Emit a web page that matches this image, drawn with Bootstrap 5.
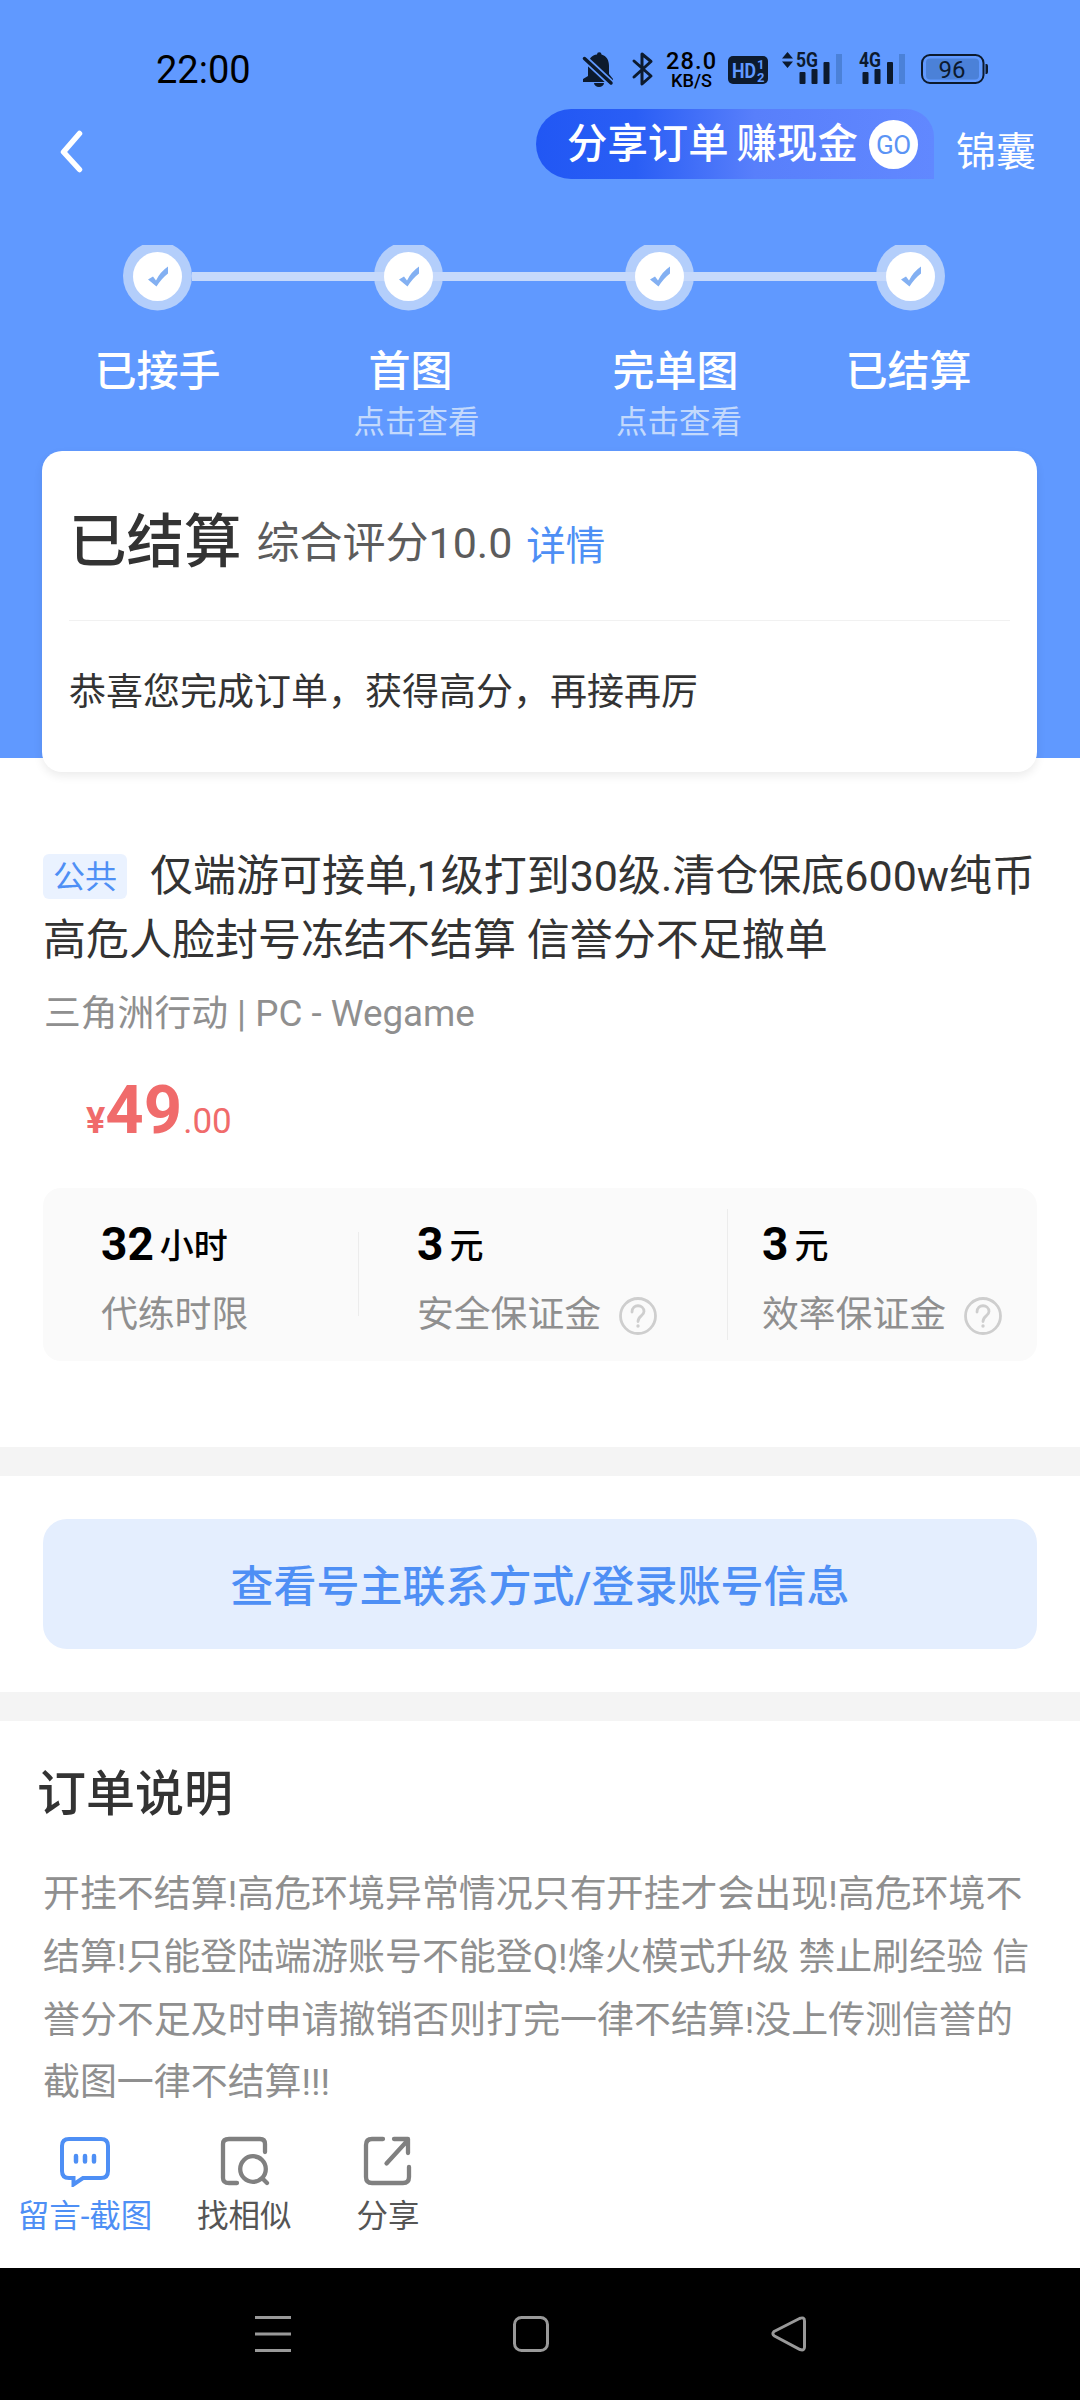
<!DOCTYPE html>
<html lang="zh-CN">
<head>
<meta charset="utf-8">
<meta name="viewport" content="width=device-width, initial-scale=1">
<title>订单详情</title>
<link rel="stylesheet" href="https://cdn.jsdelivr.net/npm/bootstrap@5.3.0/dist/css/bootstrap.min.css">
<style>
  body { font-family: Roboto, "Noto Sans CJK SC", sans-serif; color: #333; background: #fff; width: 1080px; height: 2400px; overflow: hidden; }
  svg { display: block; flex: none; }
  .hero { height: 758px; background: #6099ff; }
  .status-row { height: 90px; padding: 1px 90px 0 156px; }
  .clock { font-size: 38px; line-height: 90px; margin-top: 24px; color: #000; font-weight: 400; }
  .app-row { height: 155px; padding: 19px 43px 0 60px; }
  .back-icon { margin-top: 21px; }
  .share-pill { width: 398px; height: 70px; margin-left: 453px; padding: 0 16px 0 31px; border-radius: 35px 28px 0 35px; background: linear-gradient(90deg, #2157f4 0%, #2a5ef5 25%, #587ffb 55%, #6188ff 100%); font-size: 40.4px; font-weight: 500; word-spacing: -2px; }
  .share-text { line-height: 70px; padding-top: 2px; }
  .go-dot { width: 49px; height: 49px; margin-left: 11px; background: #fff; color: #5b94f5; font-size: 26px; font-weight: 400; line-height: 50px; letter-spacing: -.5px; }
  .kit-link { font-size: 40px; line-height: 40px; margin: 24px 0 0 22px; }
  .track { margin-left: 122px; }
  .steps { padding: 34px 0 0 94px; height: 140px; }
  .step-item { width: 127px; margin-right: 132px; }
  .step-item.near { margin-right: 106px; }
  .step-name { font-size: 42px; line-height: 54px; font-weight: 500; }
  .step-name.shift { padding-right: 12px; }
  .step-sub { font-size: 31.5px; line-height: 48px; color: #c3d9fc; }
  .result-card { height: 321px; margin: 0 43px 0 42px; border-radius: 20px; background: #fff; box-shadow: 0 4px 10px rgba(0,0,0,.08); padding: 0 27px; color: #333; }
  .result-top { height: 170px; border-bottom: 1px solid #f1f1f1; }
  .state { font-size: 57.500px; font-weight: 500; line-height: 184px; }
  .score { font-size: 43px; line-height: 185px; margin-left: 15px; color: #5c5c5c; }
  .detail { font-size: 39.5px; line-height: 191px; margin-left: 14px; color: #4e8ff5; }
  .congrats { font-size: 37px; line-height: 60px; padding-top: 42px; }
  .order { padding: 86px 43px 0 43px; height: 689px; }
  .order-title { font-size: 43px; line-height: 64px; height: 128px; white-space: nowrap; }
  .pub-tag { width: 84px; height: 45px; line-height: 46px; font-size: 32px; border-radius: 6px; background: #eaf2ff; color: #4e8ff5; vertical-align: 3px; margin-right: 23px; }
  .order-sub { font-size: 36.8px; line-height: 50px; color: #8f8f8f; margin-top: 17px; padding-left: 1px; }
  .price { color: #f06b6b; padding-left: 43px; height: 149px; padding-top: 26px; line-height: 90px; }
  .yen { font-size: 36px; font-weight: 700; }
  .amt { font-size: 67px; font-weight: 700; }
  .cents { font-size: 35px; margin-left: 1px; }
  .terms { height: 173px; border-radius: 18px; background: #fafafa; }
  .term { padding-top: 27px; }
  .term-1 { width: 315px; padding-left: 58px; }
  .term-2 { width: 368px; padding-left: 58px; }
  .term-3 { padding-left: 34px; }
  .rule-v { width: 1px; background: #ececec; }
  .num { color: #000; font-size: 34px; font-weight: 500; line-height: 58px; height: 58px; }
  .num b { font-size: 46px; margin-right: 6px; }
  .num span { vertical-align: 2px; }
  .term-label { font-size: 36.8px; line-height: 60px; margin-top: 12px; color: #8f8f8f; }
  .q-icon { margin-left: 18px; margin-top: 2px; }
  .band { height: 29px; background: #f4f4f4; }
  .contact { padding: 43px 43px 0; height: 216px; }
  .contact-btn { height: 130px; border-radius: 24px; background: #e4eefe; color: #4e8ff5; font-size: 43px; font-weight: 500; border: 0; line-height: 130px; padding: 3px 0 0; }
  .notes { height: 402px; padding: 42px 0 0 43px; }
  .notes h2 { font-size: 49px; font-weight: 500; line-height: 64px; margin: 0 0 0 -6px; }
  .notes p { font-size: 36.95px; line-height: 62.8px; color: #8f8f8f; margin: 37px 0 0; white-space: nowrap; }
  .tools { height: 145px; padding: 12px 0 0 17px; font-size: 31.5px; line-height: 40px; color: #555; }
  .tools svg { margin-bottom: 10px; }
  .tool-blue { color: #4e8ff5; width: 136px; }
  .sys-nav { height: 132px; background: #000; padding: 47px 0 0 255px; }
</style>
</head>
<body>
<header class="hero text-white">
  <div class="status-row d-flex justify-content-between align-items-start">
    <span class="clock">22:00</span>
    <svg width="408" height="44" viewBox="582 48 408 44" style="margin-top:47px" fill="#0c1a2e" font-family="Roboto, sans-serif">
      <!-- muted bell -->
      <path d="M588 76 V66 C588 59 592 55 597 54.500 A2 2 0 0 1 601.500 54.500 C606.500 56 609 60 609 66 V74 L613 79 V82 H583 V79 Z"/>
      <path d="M594 83 H604 A5 4 0 0 1 594 83 Z"/>
      <path d="M581 55 L613 85" stroke="#6099ff" stroke-width="7"/>
      <path d="M584.500 58.500 L611 83" stroke="#0c1a2e" stroke-width="3.500" stroke-linecap="round"/>
      <path d="M634 61 L651 76 L642 84 V54 L651 61.500 L634 77" fill="none" stroke="#0c1a2e" stroke-width="3" stroke-linejoin="round" stroke-linecap="round"/>
      <g fill="#000" font-weight="500"><text x="666" y="69" font-size="23.500" textLength="50">28.0</text><text x="671" y="87" font-size="17.500" textLength="41" lengthAdjust="spacingAndGlyphs">KB/S</text></g>
      <rect x="728" y="56" width="40" height="28" rx="5"/>
      <g fill="#6099ff" font-weight="700"><text x="732" y="78" font-size="21" textLength="24" lengthAdjust="spacingAndGlyphs">HD</text><text x="757" y="69" font-size="13">1</text><text x="757" y="82" font-size="13">2</text></g>
      <path d="M782 58.500 L787.500 52 L793 58.500 Z M782 61.500 L787.500 68 L793 61.500 Z"/>
      <g font-size="20" font-weight="700"><text x="796" y="67" textLength="22" lengthAdjust="spacingAndGlyphs">5G</text><text x="859" y="67" textLength="22" lengthAdjust="spacingAndGlyphs">4G</text></g>
      <g><rect x="799.500" y="72" width="6" height="12" rx="1"/><rect x="811.500" y="69" width="6" height="15" rx="1"/><rect x="823.500" y="62" width="6" height="22" rx="1"/><rect x="836" y="54" width="6" height="30" fill="#4b81d8"/>
      <rect x="862.500" y="72" width="6" height="12" rx="1"/><rect x="874.500" y="69" width="6" height="15" rx="1"/><rect x="887" y="62" width="6" height="22" rx="1"/><rect x="899" y="54" width="6" height="30" fill="#4b81d8"/></g>
      <rect x="922" y="55" width="61.500" height="28" rx="8" fill="none" stroke="#0c1a2e" stroke-width="2"/>
      <rect x="926" y="58.500" width="53" height="21" rx="4" fill="#4b81d8"/>
      <path d="M985.500 64 h1 q1.500 0 1.500 2 v6 q0 2 -1.500 2 h-1 z"/>
      <text x="938.500" y="78" font-size="24" textLength="27">96</text>
    </svg>
  </div>
  <div class="app-row d-flex align-items-start">
    <svg class="back-icon" width="23" height="43" viewBox="0 0 23 43" fill="none" stroke="#fff" stroke-width="5.500" stroke-linecap="round" stroke-linejoin="round"><path d="M19.500 3.500 L3.500 22 L19.500 39.500"/></svg>
    <div class="share-pill d-flex align-items-center text-nowrap"><span class="share-text">分享订单 赚现金</span><span class="go-dot rounded-circle text-center">GO</span></div>
    <span class="kit-link">锦囊</span>
  </div>
  <svg class="track" width="824" height="66" viewBox="0 0 824 66">
    <g fill="#b3cefb"><circle cx="35.500" cy="31" r="34.500"/><circle cx="286.500" cy="31" r="34.500"/><circle cx="537.500" cy="31" r="34.500"/><circle cx="788.500" cy="31" r="34.500"/></g>
    <rect x="70" y="27" width="718" height="9" fill="#c6d9fb"/>
    <g fill="#fff"><circle cx="35.500" cy="31.500" r="24.500"/><circle cx="286.500" cy="31.500" r="24.500"/><circle cx="537.500" cy="31.500" r="24.500"/><circle cx="788.500" cy="31.500" r="24.500"/></g>
    <g fill="#83b0f2"><path id="tick" d="M26 34.500 L31 31.500 L34 35.500 Q38 27 46 21.500 V28.500 Q40 33 34.500 41.500 Z"/><use href="#tick" x="251"/><use href="#tick" x="502"/><use href="#tick" x="753"/></g>
  </svg>
  <div class="steps d-flex text-center text-nowrap">
    <div class="step-item"><div class="step-name">已接手</div></div>
    <div class="step-item"><div class="step-name shift">首图</div><div class="step-sub">点击查看</div></div>
    <div class="step-item near"><div class="step-name">完单图</div><div class="step-sub ps-1">点击查看</div></div>
    <div class="step-item me-0"><div class="step-name">已结算</div></div>
  </div>
  <section class="result-card text-nowrap">
    <div class="result-top d-flex"><span class="state">已结算</span><span class="score">综合评分10.0</span><a class="detail text-decoration-none">详情</a></div>
    <div class="congrats">恭喜您完成订单，获得高分，再接再厉</div>
  </section>
</header>
<main>
  <section class="order">
    <div class="order-title"><span class="pub-tag d-inline-block text-center">公共</span>仅端游可接单,1级打到30级.清仓保底600w纯币<br>高危人脸封号冻结不结算 信誉分不足撤单</div>
    <div class="order-sub">三角洲行动 | PC - Wegame</div>
    <div class="price"><span class="yen">¥</span><span class="amt">49</span><span class="cents">.00</span></div>
    <div class="terms d-flex text-nowrap">
      <div class="term term-1"><div class="num"><b>32</b><span>小时</span></div><div class="term-label">代练时限</div></div>
      <div class="rule-v" style="margin:44px 0 45px"></div>
      <div class="term term-2"><div class="num"><b>3</b><span>元</span></div><div class="term-label d-flex align-items-center">安全保证金<svg class="q-icon" width="38" height="38" viewBox="0 0 38 38" fill="none" stroke="#cecece" stroke-width="2.800"><circle cx="19" cy="19" r="17.500"/><path d="M13 15 C13 6.500 25 7 25 14.500 C25 19 19 19 19 24.500" stroke-linecap="round"/><circle cx="19" cy="29" r="1.700" fill="#cecece" stroke="none"/></svg></div></div>
      <div class="rule-v" style="margin:21px 0"></div>
      <div class="term term-3"><div class="num"><b>3</b><span>元</span></div><div class="term-label d-flex align-items-center">效率保证金<svg class="q-icon" width="38" height="38" viewBox="0 0 38 38" fill="none" stroke="#cecece" stroke-width="2.800"><circle cx="19" cy="19" r="17.500"/><path d="M13 15 C13 6.500 25 7 25 14.500 C25 19 19 19 19 24.500" stroke-linecap="round"/><circle cx="19" cy="29" r="1.700" fill="#cecece" stroke="none"/></svg></div></div>
    </div>
  </section>
  <div class="band"></div>
  <section class="contact"><button class="contact-btn btn w-100" type="button">查看号主联系方式/登录账号信息</button></section>
  <div class="band"></div>
  <section class="notes">
    <h2>订单说明</h2>
    <p>开挂不结算!高危环境异常情况只有开挂才会出现!高危环境不<br>结算!只能登陆端游账号不能登Q!烽火模式升级 禁止刷经验 信<br>誉分不足及时申请撤销否则打完一律不结算!没上传测信誉的<br>截图一律不结算!!!</p>
  </section>
</main>
<nav class="tools d-flex text-center text-nowrap">
  <div class="tool-blue"><svg class="mx-auto" width="52" height="52" viewBox="0 0 52 52" fill="none" stroke="#4e8ff5" stroke-width="4"><path d="M10 4 H42 Q49 4 49 11 V36 Q49 43 42 43 H24 L14.500 49.500 V43 H10 Q3 43 3 36 V11 Q3 4 10 4 Z"/><path d="M17 21 V26.500 M26 21 V26.500 M35 21 V26.500" stroke-width="4.500" stroke-linecap="round"/></svg>留言-截图</div>
  <div style="margin-left:44px"><svg class="mx-auto" width="52" height="52" viewBox="0 0 52 52" fill="none" stroke="#808080" stroke-width="4.300" stroke-linecap="round"><path d="M47 17 V9 Q47 4 42 4 H11 Q5 4 5 9 V43 Q5 48 11 48 H19"/><circle cx="35" cy="34" r="12.800"/><path d="M44.500 43.500 L49 48"/></svg>找相似</div>
  <div style="margin-left:65px"><svg class="mx-auto" width="52" height="52" viewBox="0 0 52 52" fill="none" stroke="#808080" stroke-width="4.300" stroke-linecap="round" stroke-linejoin="round"><path d="M21 4 H10 Q4 4 4 10 V42 Q4 48 10 48 H41 Q47 48 47 42 V32"/><path d="M32 4 H46 V18 M46 5 L24.500 28.500"/></svg>分享</div>
</nav>
<footer class="sys-nav">
  <svg width="552" height="38" viewBox="255 2315 552 38" fill="none" stroke="#999" stroke-width="3"><path d="M255 2317.500 H291 M255 2334 H291 M255 2350.500 H291"/><rect x="514.500" y="2317.500" width="33" height="33" rx="7"/><path d="M774 2331.500 L799.500 2318.500 Q804.500 2316.500 804.500 2321 V2347 Q804.500 2351 800 2349.500 L774.500 2336 Q771.500 2334 774 2331.500 Z"/></svg>
</footer>
<script src="https://cdn.jsdelivr.net/npm/bootstrap@5.3.0/dist/js/bootstrap.bundle.min.js"></script>
</body>
</html>
